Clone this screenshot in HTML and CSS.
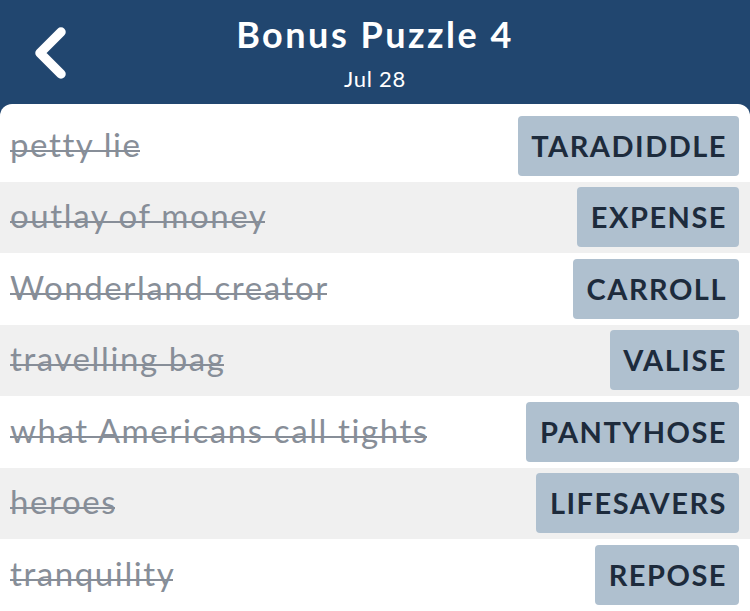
FILE: index.html
```html
<!DOCTYPE html>
<html lang="en">
<head>
    <meta charset="utf-8"/>
    <meta content="width=device-width, initial-scale=1" name="viewport"/>
    <title>Bonus Puzzle 4</title>
    <link rel="stylesheet" href="styles.css">
</head>
<body>
    <header class="topbar">
        <a href="#" class="back" aria-label="Back">
            <svg width="36" height="52" viewBox="0 0 36 52">
                <path d="M29 5 L8 26 L29 47" fill="none" stroke="#fff" stroke-width="9.5" stroke-linecap="round" stroke-linejoin="round"/>
            </svg>
        </a>
        <div class="heading">
            <h1>Bonus Puzzle 4</h1>
            <p class="date">Jul 28</p>
        </div>
    </header>
    <main class="card">
        <div class="row">
            <span class="clue">petty lie</span>
            <span class="answer">TARADIDDLE</span>
        </div>
        <div class="row">
            <span class="clue">outlay of money</span>
            <span class="answer">EXPENSE</span>
        </div>
        <div class="row">
            <span class="clue">Wonderland creator</span>
            <span class="answer">CARROLL</span>
        </div>
        <div class="row">
            <span class="clue">travelling bag</span>
            <span class="answer">VALISE</span>
        </div>
        <div class="row">
            <span class="clue">what Americans call tights</span>
            <span class="answer">PANTYHOSE</span>
        </div>
        <div class="row">
            <span class="clue">heroes</span>
            <span class="answer">LIFESAVERS</span>
        </div>
        <div class="row">
            <span class="clue">tranquility</span>
            <span class="answer">REPOSE</span>
        </div>
    </main>
</body>
</html>
```

FILE: styles.css
```css
* {
    box-sizing: border-box;
}
body, html {
    margin: 0;
    padding: 0;
    font-family: 'Lato', 'Noto Sans', sans-serif;
    background-color: #21466f;
    height: 100%;
}
.topbar {
    position: relative;
    height: 104px;
    display: flex;
    justify-content: center;
    align-items: flex-start;
    color: white;
}
.back {
    position: absolute;
    left: 32px;
    top: 27px;
    display: block;
    line-height: 0;
}
.heading {
    text-align: center;
    padding-top: 12px;
}
.heading h1 {
    margin: 0;
    font-size: 36px;
    font-weight: 700;
    line-height: 44px;
    letter-spacing: 2.5px;
}
.date {
    margin: 9px 0 0;
    font-size: 22px;
    line-height: 28px;
    letter-spacing: 0.7px;
}
.card {
    background-color: white;
    border-radius: 12px 12px 0 0;
    padding-top: 6px;
    min-height: calc(100% - 104px);
}
.row {
    display: flex;
    justify-content: space-between;
    align-items: center;
    height: 71.5px;
    padding: 0 11px 0 10px;
}
.row:nth-child(even) {
    background-color: #f0f0f0;
}
/* strike line sits lower than the browser's line-through */
.clue {
    font-size: 33px;
    line-height: 40px;
    padding-bottom: 4px;
    letter-spacing: 1.6px;
    color: #878e98;
    background: linear-gradient(#878e98, #878e98) no-repeat 0 26px / calc(100% - 1.6px) 2px;
}
.answer {
    display: inline-block;
    height: 60px;
    line-height: 60px;
    padding: 0 12px 0 13.5px;
    background-color: #afc0cf;
    border-radius: 4px;
    color: #1d2b3c;
    font-size: 29px;
    font-weight: 700;
    letter-spacing: 1.5px;
}
```
